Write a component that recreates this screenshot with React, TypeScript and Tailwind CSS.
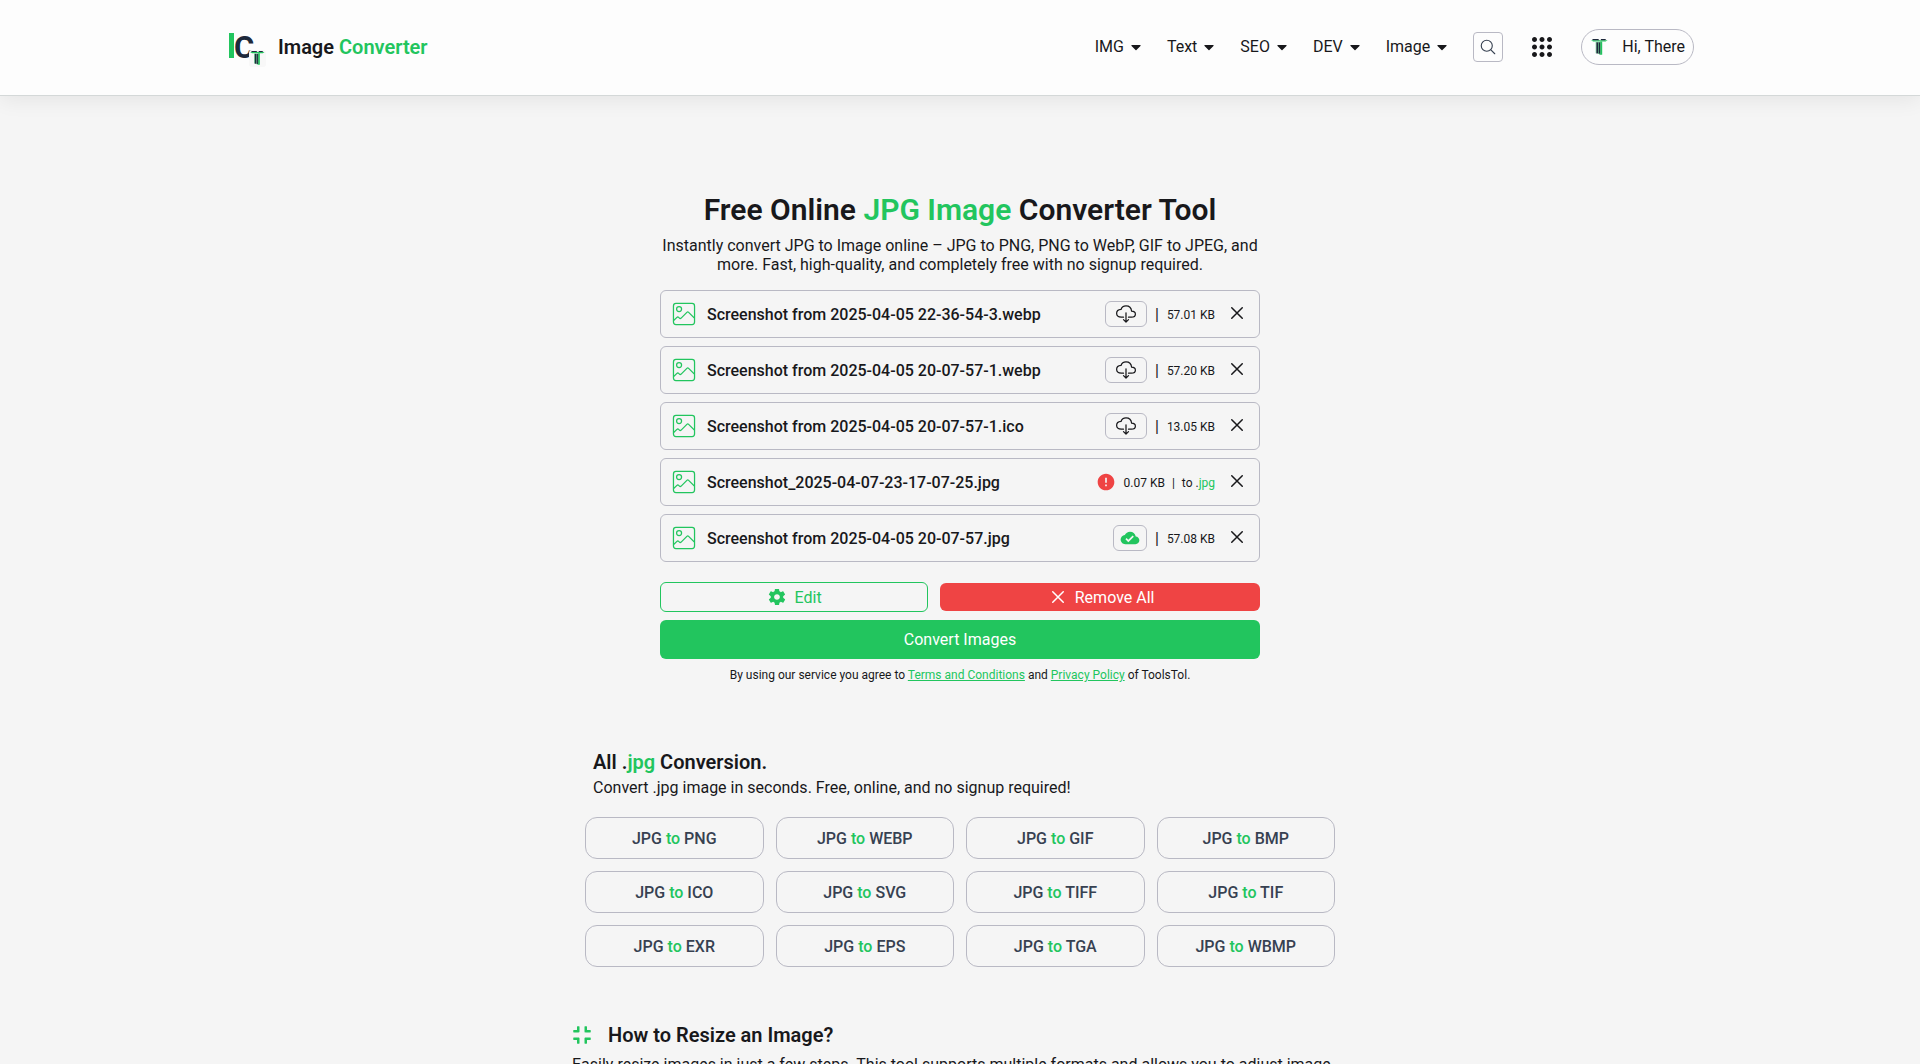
import React, { FC, useState } from 'react'
import { CgMenuGridO } from 'react-icons/cg'
import { CiImageOn } from 'react-icons/ci'
import { FaCaretDown, FaCompress } from 'react-icons/fa'
import { IoMdCloudDone, IoMdSettings } from 'react-icons/io'
import { IoCloseOutline, IoCloudDownloadOutline, IoSearchOutline } from 'react-icons/io5'
import { MdError } from 'react-icons/md'

type FileStatus = 'converted' | 'failed' | 'saved'

interface FileItem {
    name: string
    size: string
    status: FileStatus
}

const navItems = ['IMG', 'Text', 'SEO', 'DEV', 'Image']

const initialFiles: FileItem[] = [
    { name: 'Screenshot from 2025-04-05 22-36-54-3.webp', size: '57.01 KB', status: 'converted' },
    { name: 'Screenshot from 2025-04-05 20-07-57-1.webp', size: '57.20 KB', status: 'converted' },
    { name: 'Screenshot from 2025-04-05 20-07-57-1.ico', size: '13.05 KB', status: 'converted' },
    { name: 'Screenshot_2025-04-07-23-17-07-25.jpg', size: '0.07 KB', status: 'failed' },
    { name: 'Screenshot from 2025-04-05 20-07-57.jpg', size: '57.08 KB', status: 'saved' },
]

const formats = ['PNG', 'WEBP', 'GIF', 'BMP', 'ICO', 'SVG', 'TIFF', 'TIF', 'EXR', 'EPS', 'TGA', 'WBMP']

const ToolMark: FC = () => (
    <g>
        <path d="M0 1.2H16.6L14.6 2.6H2.2Z" fill="#22c55e" />
        <path d="M1 0H7.2L8.4 1.2H2.2ZM9.6 0H15.2L14 1.2H10.2Z" fill="#1e293b" />
        <path d="M4.8 3H5.4V14.2H4.8ZM7.4 3H8V15H7.4ZM9.2 2.6H11.2V15.8H8.4V14.8H9.2Z" fill="#22c55e" />
        <path d="M5.4 3.2H7.4V14.6H5.4ZM8 3.2H9.2V14.8H8Z" fill="#1e293b" />
    </g>
)

const Logo: FC = () => (
    <svg width="48" height="48" viewBox="0 0 48 48" aria-hidden="true">
        <rect x="5" y="10" width="5" height="25" fill="#22c55e" />
        <text x="10" y="35" fontSize="31" fontWeight="700" fill="#1e293b" fontFamily="Roboto, sans-serif">C</text>
        <rect x="25" y="27" width="17" height="17" rx="3" fill="#f8f8f8" />
        <svg x="26" y="28" width="15" height="14" viewBox="0 0 17 16">
            <ToolMark />
        </svg>
    </svg>
)

const Header: FC = () => (
    <header className="border-b border-[#d4d8d8] bg-[#fdfdfd] shadow-[0_4px_20px_rgba(0,0,0,0.07)]">
        <div className="mx-auto flex h-[95px] max-w-[1536px] items-center justify-between pr-[34px] pb-[2px] pl-8">
            <a href="#" className="flex items-center gap-[6px] text-xl font-semibold">
                <Logo />
                <span>
                    Image <span className="text-[#22c55e]">Converter</span>
                </span>
            </a>

            <nav className="flex items-center">
                <ul className="flex gap-[23px]">
                    {navItems.map((item) => (
                        <li key={item}>
                            <button type="button" className="flex items-center gap-1">
                                {item}
                                <FaCaretDown size={16} />
                            </button>
                        </li>
                    ))}
                </ul>
                <button
                    type="button"
                    aria-label="Search"
                    className="ml-[23px] flex size-[30px] items-center justify-center rounded border border-[#b9b9c4] text-[#374151]"
                >
                    <IoSearchOutline size={18} />
                </button>
                <button type="button" aria-label="All tools" className="ml-6">
                    <CgMenuGridO size={30} />
                </button>
                <button
                    type="button"
                    className="ml-6 flex h-9 items-center gap-[14px] rounded-full border border-[#b9b9c4] pr-2 pl-[9px]"
                >
                    <svg width="17" height="16" viewBox="0 0 17 16" aria-hidden="true">
                        <ToolMark />
                    </svg>
                    Hi, There
                </button>
            </nav>
        </div>
    </header>
)

const FileRow: FC<{ file: FileItem; onRemove: () => void }> = ({ file, onRemove }) => (
    <li className="flex h-12 items-center rounded-md border border-[#b9b9c4] pr-[10px] pl-2">
        <CiImageOn size={30} className="text-[#22c55e]" />
        <span className="ml-2 flex-1 leading-[25px] font-medium">{file.name}</span>

        {file.status === 'failed' ? (
            <div className="flex items-center text-xs">
                <MdError size={20} className="mr-2 text-[#ef4444]" />
                <span className="pt-[2px]">{file.size}</span>
                <span className="mx-[7px] pt-[2px]">|</span>
                <span className="pt-[2px]">
                    to .<span className="text-[#22c55e]">jpg</span>
                </span>
            </div>
        ) : (
            <div className="flex items-center gap-2">
                <button
                    type="button"
                    aria-label={`Download ${file.name}`}
                    className={`flex h-[26px] items-center justify-center rounded-md border border-[#b9b9c4] ${
                        file.status === 'saved' ? 'px-[6px] text-[#22c55e]' : 'px-[10px]'
                    }`}
                >
                    {file.status === 'saved' ? <IoMdCloudDone size={20} /> : <IoCloudDownloadOutline size={20} />}
                </button>
                <span className="leading-[25px]">|</span>
                <span className="pt-[2px] text-xs">{file.size}</span>
            </div>
        )}

        <button type="button" aria-label={`Remove ${file.name}`} onClick={onRemove} className="ml-[10px] pb-[2px]">
            <IoCloseOutline size={24} />
        </button>
    </li>
)

export default function App() {
    const [files, setFiles] = useState(initialFiles)

    const removeFile = (name: string) => setFiles(files.filter((file) => file.name !== name))

    return (
        <div className="min-h-screen bg-[#f5f5f5] font-[Roboto,sans-serif] text-base text-[#18181b]">
            <Header />

            <main>
                {/* CONVERTER */}
                <section className="mx-auto max-w-[600px] pt-24">
                    <h1 className="text-center text-3xl font-semibold">
                        Free Online <span className="text-[#22c55e]">JPG Image</span> Converter Tool
                    </h1>
                    <p className="mt-2 text-center leading-[19px]">
                        Instantly convert JPG to Image online – JPG to PNG, PNG to WebP, GIF to JPEG, and more. Fast,
                        high-quality, and completely free with no signup required.
                    </p>

                    <ul className="mt-4 flex flex-col gap-2">
                        {files.map((file) => (
                            <FileRow key={file.name} file={file} onRemove={() => removeFile(file.name)} />
                        ))}
                    </ul>

                    <div className="mt-5 flex items-center gap-3 leading-[25px]">
                        <button
                            type="button"
                            className="flex h-[30px] grow items-center justify-center gap-2 rounded-md border border-[#22c55e] text-[#22c55e]"
                        >
                            <IoMdSettings size={20} />
                            Edit
                        </button>
                        <button
                            type="button"
                            onClick={() => setFiles([])}
                            className="flex h-7 grow items-center justify-center gap-[5px] rounded-md bg-[#ef4444] text-white"
                        >
                            <IoCloseOutline size={24} />
                            Remove All
                        </button>
                    </div>
                    <button type="button" className="mt-2 h-[39px] w-full rounded-md bg-[#22c55e] text-white">
                        Convert Images
                    </button>
                    <p className="mt-2 text-center text-xs">
                        By using our service you agree to{' '}
                        <a href="#" className="text-[#22c55e] underline">Terms and Conditions</a> and{' '}
                        <a href="#" className="text-[#22c55e] underline">Privacy Policy</a> of ToolsTol.
                    </p>
                </section>

                {/* ALL CONVERSIONS */}
                <section className="mx-auto max-w-[750px] pt-[65px]">
                    <div className="px-2">
                        <h2 className="text-xl font-semibold">
                            All .<span className="text-[#22c55e]">jpg</span> Conversion.
                        </h2>
                        <p>Convert .jpg image in seconds. Free, online, and no signup required!</p>
                    </div>
                    <div className="mt-[17px] grid grid-cols-4 gap-3">
                        {formats.map((format) => (
                            <a
                                key={format}
                                href="#"
                                className="flex h-[42px] items-center justify-center rounded-xl border border-[#b9b9c4] leading-[25px] font-medium text-[#374151]"
                            >
                                <span>
                                    JPG <span className="text-[#22c55e]">to</span> {format}
                                </span>
                            </a>
                        ))}
                    </div>
                </section>

                {/* HOW TO */}
                <section className="mx-auto max-w-[776px] pt-[54px]">
                    <h2 className="flex items-center gap-4 text-xl font-semibold">
                        <FaCompress size={20} className="text-[#22c55e]" />
                        How to Resize an Image?
                    </h2>
                    <p className="mt-1">
                        Easily resize images in just a few steps. This tool supports multiple formats and allows you to
                        adjust image
                    </p>
                </section>
            </main>
        </div>
    )
}
